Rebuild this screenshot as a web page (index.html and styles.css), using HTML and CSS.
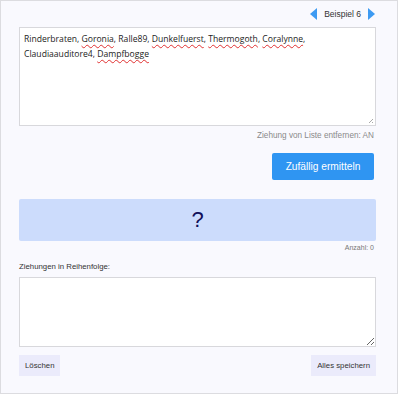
FILE: index.html
```html
<!DOCTYPE html>
<html lang="de">
<head>
    <meta charset="UTF-8">
    <title>Zufallsziehung</title>
    <link rel="stylesheet" href="styles.css">
</head>
<body>
    <div class="page">
        <div class="example-nav">
            <span class="arrow left"></span>
            <span class="example-label">Beispiel 6</span>
            <span class="arrow right"></span>
        </div>

        <div class="list-box">Rinderbraten, <span class="typo">Goronia</span>, Ralle89, <span class="typo">Dunkelfuerst</span>, <span class="typo">Thermogoth</span>, <span class="typo">Coralynne</span>,<br>Claudiaauditore4, <span class="typo">Dampfbogge</span></div>
        <p class="option">Ziehung von Liste entfernen: AN</p>

        <div class="action-row">
            <button class="button draw">Zufällig ermitteln</button>
        </div>

        <div class="result">?</div>
        <p class="count">Anzahl: 0</p>

        <p class="history-label">Ziehungen in Reihenfolge:</p>
        <textarea class="history" spellcheck="false"></textarea>

        <div class="footer-row">
            <button class="button small">Löschen</button>
            <button class="button small">Alles speichern</button>
        </div>
    </div>
</body>
</html>
```

FILE: styles.css
```css
body {
    margin: 0;
    font-family: "Liberation Sans", Arial, sans-serif;
    background: #ffffff;
}
.page {
    box-sizing: border-box;
    width: 398px;
    height: 394px;
    padding: 0 21px 0 18px;
    background: #f9f9fe;
    border: 1px solid #dcdce0;
}
.example-nav {
    display: flex;
    justify-content: flex-end;
    align-items: center;
    height: 26px;
    padding-right: 1px;
    gap: 7px;
}
.example-label {
    font-size: 8.5px;
    color: #333;
}
.arrow {
    width: 0;
    height: 0;
    border-top: 6px solid transparent;
    border-bottom: 6px solid transparent;
}
.arrow.left { border-right: 7px solid #3d9af2; }
.arrow.right { border-left: 7px solid #3d9af2; }

.list-box {
    position: relative;
    box-sizing: border-box;
    height: 99px;
    padding: 4px 4px;
    background: #fff;
    border: 1px solid #d8d8dc;
    font-family: "Open Sans", sans-serif;
    font-size: 8.6px;
    line-height: 15px;
    color: #222;
}
.list-box::after {
    content: "";
    position: absolute;
    right: 2px;
    bottom: 2px;
    width: 5px;
    height: 5px;
    background: linear-gradient(135deg, transparent 55%, #aaa 55%, #aaa 65%, transparent 65%, transparent 80%, #aaa 80%);
}
.typo {
    text-decoration: underline wavy #e03030;
    text-decoration-thickness: 1px;
    text-underline-offset: 2px;
}
.option {
    margin: 4px 2px 0 0;
    line-height: 12px;
    text-align: right;
    font-size: 8.2px;
    color: #8a8a8a;
}
.action-row {
    display: flex;
    justify-content: flex-end;
    margin-top: 11px;
    padding-right: 2px;
}
.button {
    font-family: "Liberation Sans", Arial, sans-serif;
    border: none;
    cursor: pointer;
    white-space: nowrap;
}
.draw {
    width: 102px;
    height: 27px;
    padding: 0;
    background: #2f95f2;
    color: #fff;
    font-size: 10.2px;
    border-radius: 2px;
}
.result {
    margin-top: 19px;
    height: 42px;
    display: flex;
    align-items: center;
    justify-content: center;
    background: #ccdcfc;
    border-radius: 2px;
    color: #10105a;
    font-size: 22px;
}
.count {
    margin: 2px 2px 0 0;
    line-height: 10px;
    text-align: right;
    font-size: 7px;
    color: #777;
}
.history-label {
    margin: 8px 0 0;
    line-height: 12px;
    font-size: 7.8px;
    color: #333;
}
.history {
    display: block;
    box-sizing: border-box;
    width: 100%;
    height: 70px;
    margin-top: 4px;
    border: 1px solid #d8d8dc;
    background: #fff;
    resize: vertical;
}
.footer-row {
    display: flex;
    justify-content: space-between;
    margin-top: 8px;
}
.small {
    height: 21px;
    padding: 0 6px;
    background: #ebebfb;
    color: #333;
    font-size: 7.8px;
}
```
